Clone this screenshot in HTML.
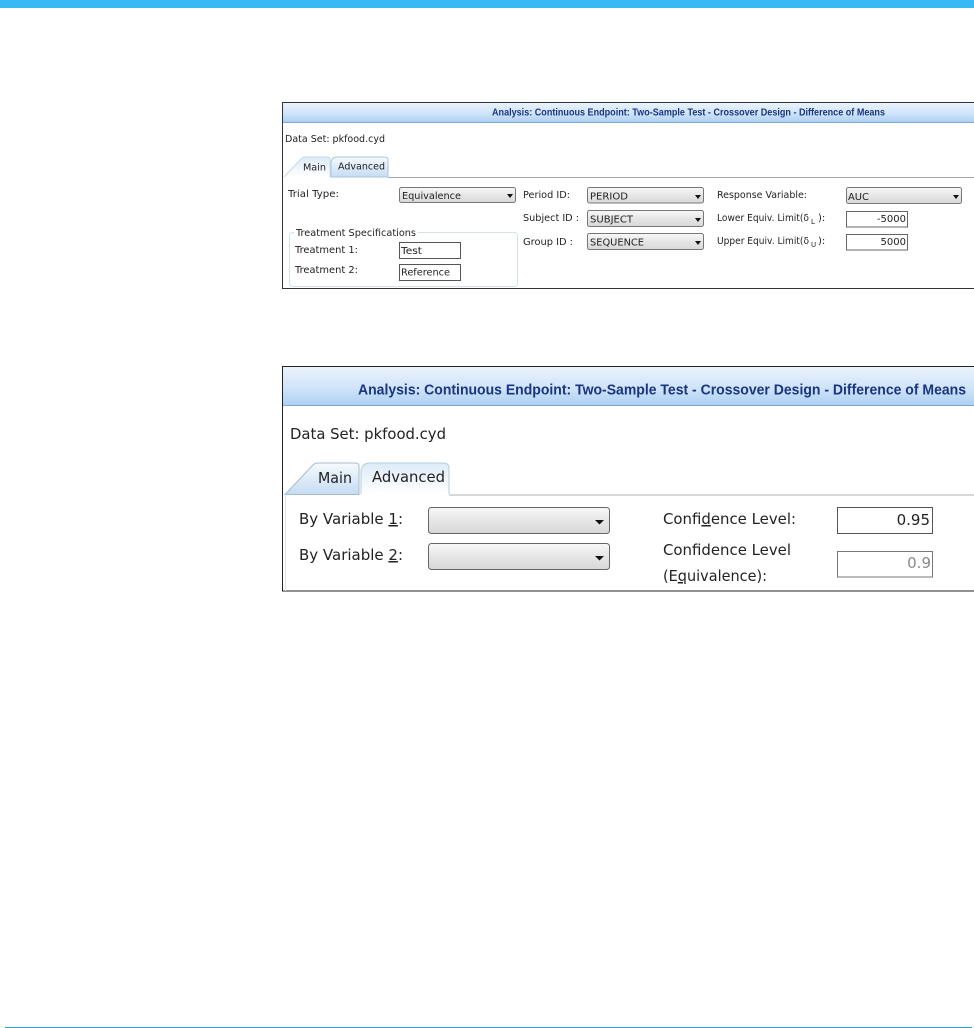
<!DOCTYPE html>
<html lang="en">
<head>
<meta charset="utf-8">
<title>Analysis: Continuous Endpoint</title>
<style>
html,body{margin:0;padding:0;background:#fff;width:974px;height:1028px;overflow:hidden}
svg{display:block;position:absolute;left:0;top:0}
text{font-family:"DejaVu Sans","Liberation Sans",sans-serif;fill:#222;filter:blur(.3px)}
.t{font-family:"Liberation Sans",sans-serif;font-weight:bold;fill:#1a3580}
</style>
</head>
<body>
<svg width="974" height="1028" viewBox="0 0 974 1028" xmlns="http://www.w3.org/2000/svg">
<defs>
<linearGradient id="band" x1="0" y1="0" x2="0" y2="1"><stop offset="0" stop-color="#eaf3fd"/><stop offset=".55" stop-color="#d0e4f9"/><stop offset="1" stop-color="#aed0f3"/></linearGradient>
<linearGradient id="sel" x1="0" y1="0" x2="0" y2="1"><stop offset="0" stop-color="#f8f8f8"/><stop offset=".5" stop-color="#e6e6e6"/><stop offset="1" stop-color="#d8d8d8"/></linearGradient>
<linearGradient id="on" x1="0" y1="0" x2="0" y2="1"><stop offset="0" stop-color="#dcebf9"/><stop offset="1" stop-color="#ffffff"/></linearGradient>
<linearGradient id="off" x1="0" y1="0" x2="0" y2="1"><stop offset="0" stop-color="#f6fafe"/><stop offset="1" stop-color="#c5dcf3"/></linearGradient>
</defs>

<rect x="0" y="0" width="974" height="8" fill="#36b9f4"/>
<rect x="5" y="1027" width="967" height="1" fill="#2a9fd6"/>

<!-- Panel 1 -->
<rect x="282.500" y="102.500" width="692" height="186" fill="#fff" stroke="#333"/>
<rect x="283" y="103" width="691" height="19" fill="url(#band)"/>
<rect x="283" y="122" width="691" height="1" fill="#7fa9d6"/>
<text class="t" x="492" y="115.500" font-size="10" textLength="393" lengthAdjust="spacingAndGlyphs">Analysis: Continuous Endpoint: Two-Sample Test - Crossover Design - Difference of Means</text>
<text x="285" y="142" font-size="10" textLength="100" lengthAdjust="spacingAndGlyphs">Data Set: pkfood.cyd</text>

<rect x="388" y="177" width="586" height="1" fill="#a8a8a8"/>
<path d="M284 177 L301 159 Q303 157 306 157 L328 157 Q330 157 330 160 L330 177" fill="url(#on)" stroke="#c9d9e8"/>
<path d="M331 177 L331 162 Q332 157 338 157 L384 157 Q388 157 388 160 L388 177 Z" fill="url(#off)" stroke="#a9c5dc"/>
<text x="303" y="170.500" font-size="10" textLength="23" lengthAdjust="spacingAndGlyphs">Main</text>
<text x="338" y="169.500" font-size="10" textLength="47" lengthAdjust="spacingAndGlyphs">Advanced</text>

<text x="288" y="197" font-size="10" textLength="51" lengthAdjust="spacingAndGlyphs">Trial Type:</text>
<rect x="399.500" y="187.500" width="116" height="15" rx="2" fill="url(#sel)" stroke="#777"/>
<text x="402" y="199" font-size="10" textLength="59" lengthAdjust="spacingAndGlyphs">Equivalence</text>
<path d="M507 194 h6 l-3 4 z" fill="#111"/>

<text x="523" y="198" font-size="10" textLength="47" lengthAdjust="spacingAndGlyphs">Period ID:</text>
<text x="523" y="221" font-size="10" textLength="56" lengthAdjust="spacingAndGlyphs">Subject ID :</text>
<text x="523" y="245" font-size="10" textLength="50" lengthAdjust="spacingAndGlyphs">Group ID :</text>

<rect x="587.500" y="187.500" width="116" height="15.500" rx="2" fill="url(#sel)" stroke="#777"/>
<text x="590" y="199.500" font-size="9.500" textLength="38" lengthAdjust="spacingAndGlyphs">PERIOD</text>
<path d="M695 195 h6 l-3 4 z" fill="#111"/>
<rect x="587.500" y="210.500" width="116" height="16" rx="2" fill="url(#sel)" stroke="#777"/>
<text x="590" y="222.500" font-size="9.500" textLength="43" lengthAdjust="spacingAndGlyphs">SUBJECT</text>
<path d="M695 218 h6 l-3 4 z" fill="#111"/>
<rect x="587.500" y="233.500" width="116" height="16" rx="2" fill="url(#sel)" stroke="#777"/>
<text x="590" y="245.500" font-size="9.500" textLength="54" lengthAdjust="spacingAndGlyphs">SEQUENCE</text>
<path d="M695 241 h6 l-3 4 z" fill="#111"/>

<text x="717" y="198" font-size="10" textLength="90" lengthAdjust="spacingAndGlyphs">Response Variable:</text>
<text x="717" y="221" font-size="10" textLength="92" lengthAdjust="spacingAndGlyphs">Lower Equiv. Limit(δ</text>
<text x="811" y="224" font-size="7">L</text>
<text x="818" y="221" font-size="10">):</text>
<text x="717" y="244" font-size="10" textLength="92" lengthAdjust="spacingAndGlyphs">Upper Equiv. Limit(δ</text>
<text x="811" y="247" font-size="7">U</text>
<text x="818" y="244" font-size="10">):</text>
<rect x="846.500" y="187.500" width="115" height="16" rx="2" fill="url(#sel)" stroke="#777"/>
<text x="848" y="200" font-size="9.500" textLength="21" lengthAdjust="spacingAndGlyphs">AUC</text>
<path d="M953 195 h6 l-3 4 z" fill="#111"/>
<rect x="846.500" y="211.500" width="61" height="15.500" fill="#fff" stroke="#666"/>
<text x="906" y="222" font-size="10" text-anchor="end">-5000</text>
<rect x="846.500" y="234.500" width="61" height="15.500" fill="#fff" stroke="#666"/>
<text x="906" y="245" font-size="10" text-anchor="end">5000</text>

<rect x="289.500" y="232.500" width="228" height="54" rx="3" fill="none" stroke="#d5e2ea"/>
<rect x="294" y="229" width="124" height="8" fill="#fff"/>
<text x="296" y="236" font-size="10" textLength="120" lengthAdjust="spacingAndGlyphs">Treatment Specifications</text>
<text x="295" y="253" font-size="10" textLength="63" lengthAdjust="spacingAndGlyphs">Treatment 1:</text>
<text x="295" y="273" font-size="10" textLength="63" lengthAdjust="spacingAndGlyphs">Treatment 2:</text>
<rect x="399.500" y="242.500" width="61" height="16" fill="#fff" stroke="#555"/>
<text x="401" y="254" font-size="10" textLength="21" lengthAdjust="spacingAndGlyphs">Test</text>
<rect x="399.500" y="264.500" width="61" height="16" fill="#fff" stroke="#555"/>
<text x="401" y="275.500" font-size="10" textLength="49" lengthAdjust="spacingAndGlyphs">Reference</text>

<!-- Panel 2 -->
<rect x="282.500" y="366.500" width="692" height="224.500" fill="#fff" stroke="#222"/>
<rect x="283" y="367" width="691" height="38" fill="url(#band)"/>
<rect x="283" y="405" width="691" height="1" fill="#7fa9d6"/>
<text class="t" x="358" y="394.500" font-size="14.500" textLength="608" lengthAdjust="spacingAndGlyphs">Analysis: Continuous Endpoint: Two-Sample Test - Crossover Design - Difference of Means</text>
<text x="290" y="439" font-size="15" textLength="156" lengthAdjust="spacingAndGlyphs">Data Set: pkfood.cyd</text>

<rect x="449" y="494.500" width="525" height="1" fill="#b0b0b0"/>
<rect x="285" y="495" width="1" height="96" fill="#e2e2e2"/>
<path d="M285 494.500 L313 465 Q315 463 318 463 L355 463 Q359 463 359 466 L359 494.500 Z" fill="url(#off)" stroke="#a9bccd"/>
<path d="M361 494 L361 471 Q362 463 370 463 L443 463 Q449 463 449 468 L449 494" fill="url(#on)" stroke="#b5cde0"/>
<text x="318" y="483" font-size="15" textLength="34" lengthAdjust="spacingAndGlyphs">Main</text>
<text x="372" y="482" font-size="15" textLength="73" lengthAdjust="spacingAndGlyphs">Advanced</text>

<text x="299" y="524" font-size="15" textLength="104" lengthAdjust="spacingAndGlyphs">By Variable <tspan text-decoration="underline">1</tspan>:</text>
<text x="299" y="560" font-size="15" textLength="104" lengthAdjust="spacingAndGlyphs">By Variable <tspan text-decoration="underline">2</tspan>:</text>
<rect x="428.500" y="507.500" width="181" height="26" rx="3" fill="url(#sel)" stroke="#666"/>
<path d="M595 520 h9 l-4.500 4.500 z" fill="#111"/>
<rect x="428.500" y="543.500" width="181" height="26" rx="3" fill="url(#sel)" stroke="#666"/>
<path d="M595 556 h9 l-4.500 4.500 z" fill="#111"/>

<text x="663" y="524" font-size="15" textLength="133" lengthAdjust="spacingAndGlyphs">Confi<tspan text-decoration="underline">d</tspan>ence Level:</text>
<text x="663" y="555" font-size="15" textLength="128" lengthAdjust="spacingAndGlyphs">Confidence Level</text>
<text x="663" y="581" font-size="15" textLength="104" lengthAdjust="spacingAndGlyphs">(E<tspan text-decoration="underline">q</tspan>uivalence):</text>
<rect x="837.500" y="507.500" width="95" height="26" fill="#fff" stroke="#555"/>
<text x="930" y="525" font-size="15" text-anchor="end">0.95</text>
<rect x="837.500" y="551.500" width="95" height="25.500" fill="#fff" stroke="#777"/>
<text x="931" y="568" font-size="15" text-anchor="end" style="fill:#8a8a8a">0.9</text>
</svg>
</body>
</html>
